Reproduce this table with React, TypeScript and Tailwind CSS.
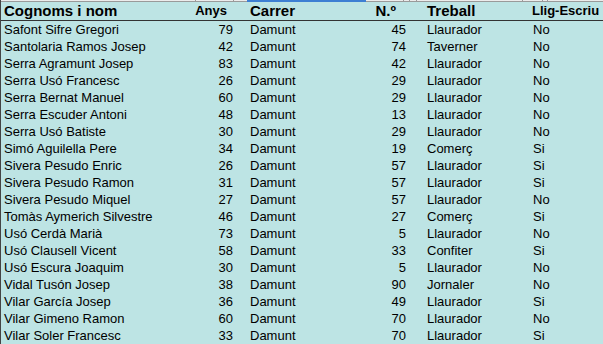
const rows: [string, number, string, number, string, string][] = [
  ['Safont Sifre Gregori', 79, 'Damunt', 45, 'Llaurador', 'No'],
  ['Santolaria Ramos Josep', 42, 'Damunt', 74, 'Taverner', 'No'],
  ['Serra Agramunt Josep', 83, 'Damunt', 42, 'Llaurador', 'No'],
  ['Serra Usó Francesc', 26, 'Damunt', 29, 'Llaurador', 'No'],
  ['Serra Bernat Manuel', 60, 'Damunt', 29, 'Llaurador', 'No'],
  ['Serra Escuder Antoni', 48, 'Damunt', 13, 'Llaurador', 'No'],
  ['Serra Usó Batiste', 30, 'Damunt', 29, 'Llaurador', 'No'],
  ['Simó Aguilella Pere', 34, 'Damunt', 19, 'Comerç', 'Si'],
  ['Sivera Pesudo Enric', 26, 'Damunt', 57, 'Llaurador', 'Si'],
  ['Sivera Pesudo Ramon', 31, 'Damunt', 57, 'Llaurador', 'Si'],
  ['Sivera Pesudo Miquel', 27, 'Damunt', 57, 'Llaurador', 'No'],
  ['Tomàs Aymerich Silvestre', 46, 'Damunt', 27, 'Comerç', 'Si'],
  ['Usó Cerdà Marià', 73, 'Damunt', 5, 'Llaurador', 'No'],
  ['Usó Clausell Vicent', 58, 'Damunt', 33, 'Confiter', 'Si'],
  ['Usó Escura Joaquim', 30, 'Damunt', 5, 'Llaurador', 'No'],
  ['Vidal Tusón Josep', 38, 'Damunt', 90, 'Jornaler', 'No'],
  ['Vilar García Josep', 36, 'Damunt', 49, 'Llaurador', 'Si'],
  ['Vilar Gimeno Ramon', 60, 'Damunt', 70, 'Llaurador', 'No'],
  ['Vilar Soler Francesc', 33, 'Damunt', 70, 'Llaurador', 'Si'],
];

const ticks = [195, 233, 403, 409, 416, 522, 542, 547];

export default function App() {
  return (
    <div className="h-[344px] w-[603px] overflow-hidden border-l border-[#444] bg-[#bde4e4] font-['Liberation_Sans',Arial,sans-serif] text-black">
      {/* cut-off column header strip */}
      <div className="relative h-[2px] border-b border-[#9a9a9a] bg-[#ececec]">
        <span className="absolute left-[246px] top-0 h-[2px] w-[119px] bg-[#3d7fd3]" />
        {ticks.map((x) => (
          <span key={x} className="absolute top-0 h-[2px] w-px bg-[#9a9a9a]" style={{ left: x - 1 }} />
        ))}
      </div>

      <div className="flex h-[19px] items-center border-b border-[#333] font-bold">
        <div className="w-[179px] pl-[3px] text-[15px]">Cognoms i nom</div>
        <div className="w-[56px] pr-[9px] text-right text-[13px]">Anys</div>
        <div className="w-[109px] pl-[14px] text-[15px]">Carrer</div>
        <div className="w-[64px] pr-[13px] text-right text-[15px]">N.º</div>
        <div className="w-[111px] pl-[18px] text-[15px]">Treball</div>
        <div className="flex-1 pl-[12px] text-[13px]">Llig-Escriu</div>
      </div>

      {rows.map(([name, age, street, num, job, reads]) => (
        <div key={name} className="flex h-[17px] items-center text-[13px] leading-none">
          <div className="w-[179px] pl-[3px]">{name}</div>
          <div className="w-[56px] pr-[3px] text-right">{age}</div>
          <div className="w-[109px] pl-[14px]">{street}</div>
          <div className="w-[64px] pr-[3px] text-right">{num}</div>
          <div className="w-[111px] pl-[18px]">{job}</div>
          <div className="flex-1 pl-[13px]">{reads}</div>
        </div>
      ))}
    </div>
  );
}
